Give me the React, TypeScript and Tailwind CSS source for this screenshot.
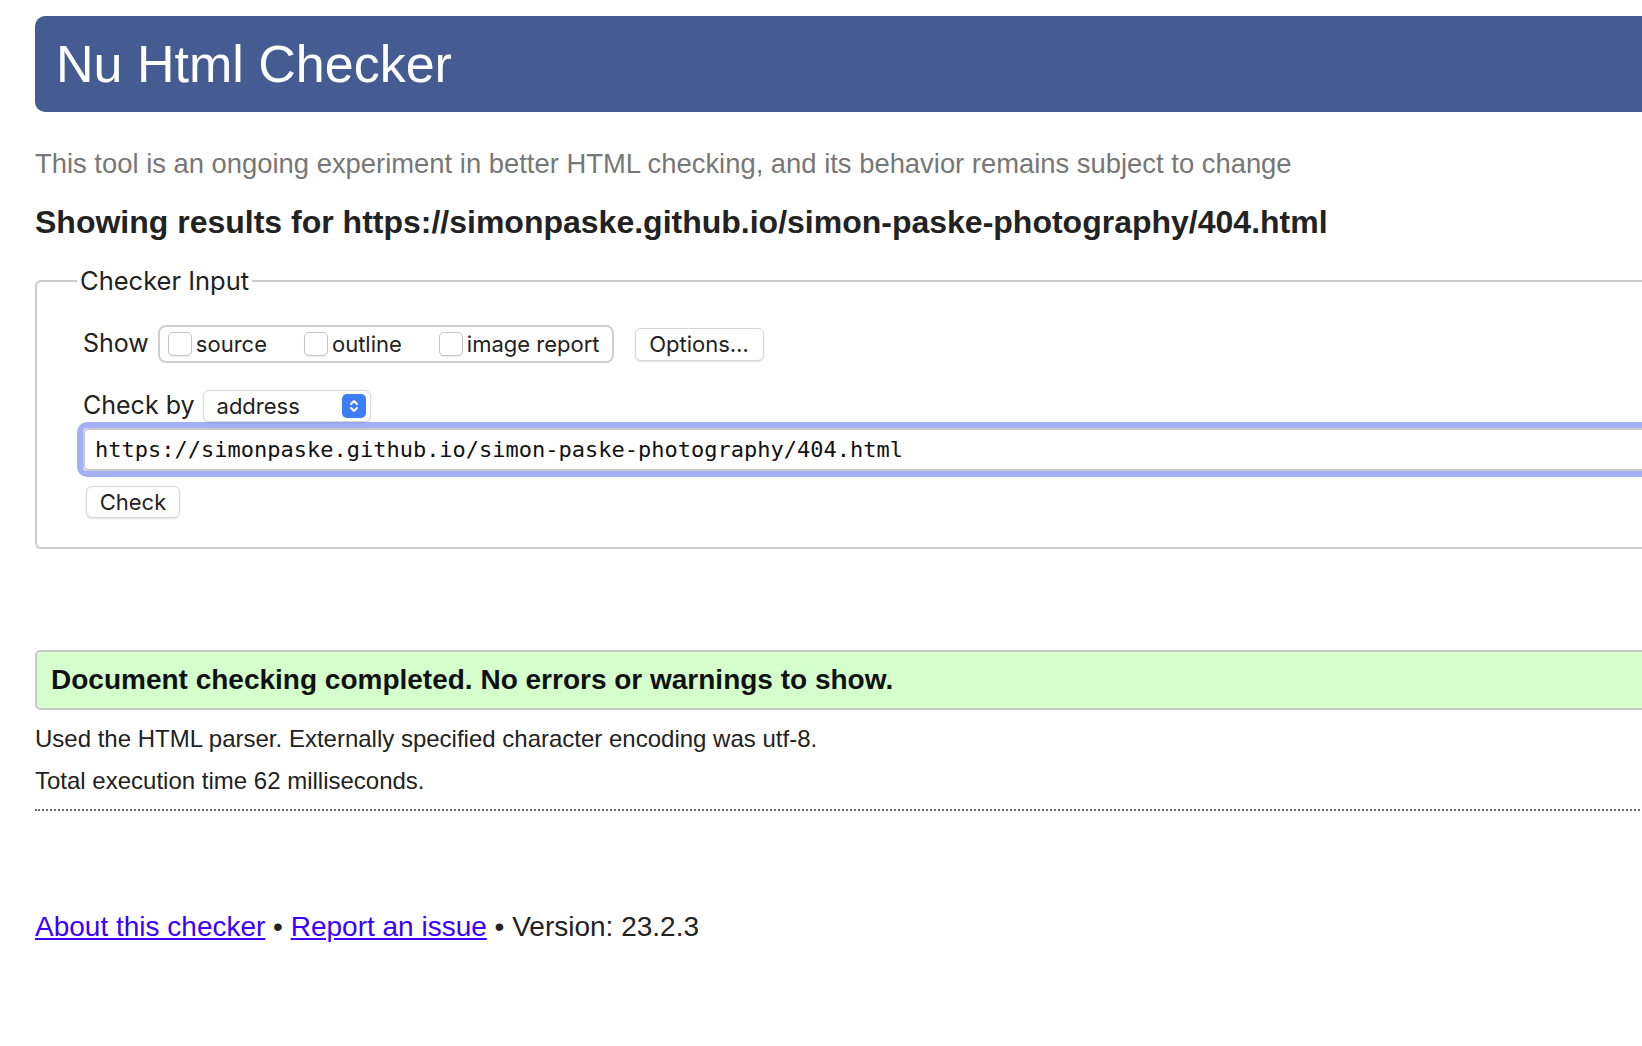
import React from "react";

/* Nu Html Checker — results page */

const sans = "font-['Liberation_Sans',Arial,sans-serif]";
const ui = "font-['Inter',sans-serif]";

function Checkbox() {
  return (
    <span className="inline-block h-[24px] w-[24px] shrink-0 rounded-[5px] border border-[#c4c4c4] bg-white shadow-[0_1px_1px_rgba(0,0,0,0.08)]" />
  );
}

function Stepper() {
  return (
    <span className="flex h-[24px] w-[24px] items-center justify-center rounded-[5px] bg-[#3d7ef6]">
      <svg width="12" height="18" viewBox="0 0 12 18" fill="none" stroke="white" strokeWidth="2" strokeLinecap="round" strokeLinejoin="round">
        <path d="M3 7 L6 4 L9 7" />
        <path d="M3 11 L6 14 L9 11" />
      </svg>
    </span>
  );
}

const options = ["source", "outline", "image report"];

export default function App() {
  return (
    <div className="h-[1046px] w-full overflow-hidden bg-white">
      <div className={`w-[1720px] pl-[35px] pt-[16px] text-[#222] ${sans}`}>
        {/* Header */}
        <div className="flex h-[96px] items-center rounded-[10px] bg-[#455c93] pl-[21px]">
          <h1 className="text-[52px] leading-none font-normal text-white">Nu Html Checker</h1>
        </div>

        <p className="mt-[36px] text-[27.4px] leading-[32px] text-[#777]">
          This tool is an ongoing experiment in better HTML checking, and its behavior remains subject to change
        </p>

        <h2 className="mt-[26px] text-[32px] leading-[32px] font-bold text-[#222]">
          Showing results for https://simonpaske.github.io/simon-paske-photography/404.html
        </h2>

        {/* Checker input */}
        <fieldset className="mt-[27px] rounded-[6px] border-2 border-[#cbcbcb] pl-[40px] pb-[29px]">
          <legend className={`px-[3px] text-[25.5px] leading-[32px] text-[#222] ${ui}`}>Checker Input</legend>

          <div className={`mt-[28px] flex h-[38px] items-center pl-[6px] ${ui}`}>
            <span className="text-[25px] text-[#222]">Show</span>
            <div className="ml-[9px] flex h-[38px] items-center gap-[37px] rounded-[8px] border-2 border-[#cfcfcf] pl-[8px] pr-[12px]">
              {options.map((o) => (
                <label key={o} className="flex items-center gap-[4px] text-[22px] text-[#222]">
                  <Checkbox />
                  {o}
                </label>
              ))}
            </div>
            <button className="ml-[21px] flex h-[33px] w-[129px] items-center justify-center rounded-[6px] border border-[#d6d6d6] bg-white text-[22px] text-[#222] shadow-[0_1px_2px_rgba(0,0,0,0.12)]">
              Options…
            </button>
          </div>

          <div className={`mt-[27px] flex h-[32px] items-center pl-[6px] ${ui}`}>
            <span className="text-[25px] text-[#222]">Check by</span>
            <div className="ml-[8px] flex h-[32px] w-[168px] items-center justify-between rounded-[6px] border border-[#dadada] bg-white pl-[13px] pr-[4px] shadow-[0_1px_2px_rgba(0,0,0,0.1)]">
              <span className="text-[22px] text-[#222]">address</span>
              <Stepper />
            </div>
          </div>

          <div className="rounded-[10px] border-[6px] border-[#a3b0f6]">
            <div className="flex h-[43px] items-center rounded-[5px] border-2 border-[#c9c9c9] bg-white pl-[10px]">
              <span className="font-['DejaVu_Sans_Mono',monospace] text-[22px] text-[#111]">
                https://simonpaske.github.io/simon-paske-photography/404.html
              </span>
            </div>
          </div>

          <button className={`ml-[9px] mt-[9px] flex h-[32px] w-[94px] items-center justify-center rounded-[6px] border border-[#d6d6d6] bg-white text-[22px] text-[#222] shadow-[0_1px_2px_rgba(0,0,0,0.12)] ${ui}`}>
            Check
          </button>
        </fieldset>

        {/* Result */}
        <div className="mt-[101px] flex h-[60px] items-center rounded-[5px] border-2 border-[#c9c9c9] bg-[#d4ffcc] pl-[14px]">
          <p className="text-[28px] font-bold text-[#111]">Document checking completed. No errors or warnings to show.</p>
        </div>

        <p className="mt-[14px] text-[24px] leading-[30px]">
          Used the HTML parser. Externally specified character encoding was utf-8.
        </p>
        <p className="mt-[12px] text-[24px] leading-[30px]">Total execution time 62 milliseconds.</p>

        <div className="mt-[13px] border-t-2 border-dotted border-[#6a6a6a]" />

        {/* Footer */}
        <p className="mt-[98px] text-[28px] leading-[36px] text-[#222]">
          <a href="#" className="text-[#3b00ff] underline">About this checker</a>
          {" • "}
          <a href="#" className="text-[#3b00ff] underline">Report an issue</a>
          {" • Version: 23.2.3"}
        </p>
      </div>
    </div>
  );
}
